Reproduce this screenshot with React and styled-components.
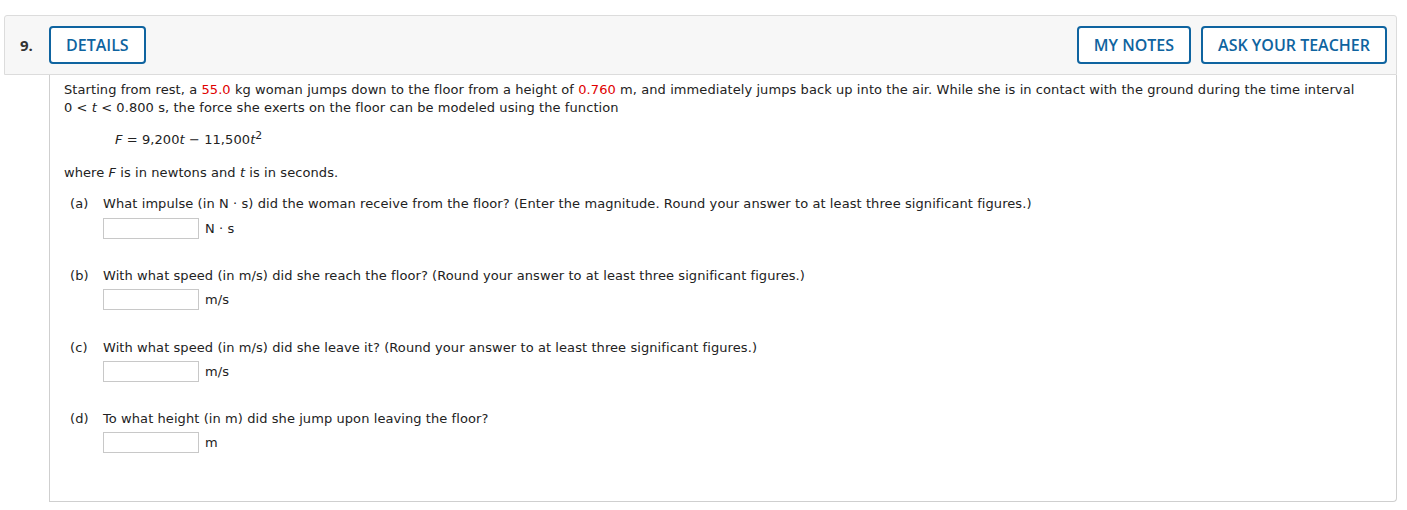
import React from 'react';
import styled, { createGlobalStyle } from 'styled-components';

const Global = createGlobalStyle`
  body {
    margin: 0;
    background: #fff;
    font-family: Verdana, "DejaVu Sans", sans-serif;
    color: #222;
  }
`;

const Page = styled.div`
  padding: 15px 10px 0 4px;
  width: 1393px;
`;

const Header = styled.div`
  display: flex;
  align-items: center;
  height: 58px;
  background: #f7f7f7;
  border: 1px solid #dcdcdc;
  border-radius: 3px 3px 0 0;
  padding: 0 9px 0 0;
`;

const Number = styled.div`
  width: 44px;
  padding-left: 15px;
  box-sizing: border-box;
  font-family: "Open Sans", "Liberation Sans", sans-serif;
  font-weight: 700;
  font-size: 15px;
  color: #333;
`;

const Button = styled.button`
  height: 38px;
  padding: 0 15px;
  background: #fff;
  border: 2px solid #0f64a0;
  border-radius: 4px;
  color: #0f64a0;
  font-family: "Open Sans", "Liberation Sans", sans-serif;
  font-weight: 600;
  font-size: 16px;
  text-transform: uppercase;
  margin-left: ${p => (p.$gap ? '10px' : '0')};
  cursor: pointer;
`;

const Spacer = styled.div`
  flex: 1;
`;

const Body = styled.div`
  margin-left: 45px;
  border: 1px solid #cfcfcf;
  border-top: none;
  border-radius: 0 0 4px 0;
  padding: 6px 14px 48px 14px;
  font-size: 13px;
  line-height: 18px;
  letter-spacing: 0.08px;
`;

const Para = styled.p`
  margin: 0;
`;

const Red = styled.span`
  color: #e00000;
`;

const Formula = styled.div`
  margin: 14px 0 0 51px;
  height: 18px;
`;

const Where = styled.p`
  margin: 15px 0 0 0;
`;

const Part = styled.div`
  margin-top: ${p => p.$top}px;
`;

const Question = styled.div`
  display: flex;
`;

const Letter = styled.span`
  width: 39px;
  padding-left: 6px;
  box-sizing: border-box;
`;

const AnswerRow = styled.div`
  display: flex;
  align-items: center;
  margin: ${p => p.$gap}px 0 0 39px;
`;

const Input = styled.input`
  width: 96px;
  height: 21px;
  box-sizing: border-box;
  border: 1px solid #c8c8c8;
  border-radius: 0;
  padding: 0 4px;
  margin: 0 6px 0 0;
  font: inherit;
`;

const parts = [
  {
    letter: '(a)',
    text: 'What impulse (in N · s) did the woman receive from the floor? (Enter the magnitude. Round your answer to at least three significant figures.)',
    unit: 'N · s',
    top: 13,
    gap: 5,
  },
  {
    letter: '(b)',
    text: 'With what speed (in m/s) did she reach the floor? (Round your answer to at least three significant figures.)',
    unit: 'm/s',
    top: 28,
    gap: 4,
  },
  {
    letter: '(c)',
    text: 'With what speed (in m/s) did she leave it? (Round your answer to at least three significant figures.)',
    unit: 'm/s',
    top: 29,
    gap: 4,
  },
  {
    letter: '(d)',
    text: 'To what height (in m) did she jump upon leaving the floor?',
    unit: 'm',
    top: 28,
    gap: 4,
  },
];

export default function App() {
  return (
    <Page>
      <Global />
      <Header>
        <Number>9.</Number>
        <Button>Details</Button>
        <Spacer />
        <Button>My Notes</Button>
        <Button $gap>Ask Your Teacher</Button>
      </Header>
      <Body>
        <Para>
          Starting from rest, a <Red>55.0</Red> kg woman jumps down to the floor from a height of{' '}
          <Red>0.760</Red> m, and immediately jumps back up into the air. While she is in contact
          with the ground during the time interval <br />0 &lt; <i>t</i> &lt; 0.800 s, the force she
          exerts on the floor can be modeled using the function
        </Para>
        <Formula>
          <i>F</i> = 9,200<i>t</i> − 11,500<i>t</i>
          <sup style={{ lineHeight: 0 }}>2</sup>
        </Formula>
        <Where>
          where <i>F</i> is in newtons and <i>t</i> is in seconds.
        </Where>
        {parts.map(p => (
          <Part key={p.letter} $top={p.top}>
            <Question>
              <Letter>{p.letter}</Letter>
              <span>{p.text}</span>
            </Question>
            <AnswerRow $gap={p.gap}>
              <Input type="text" />
              <span>{p.unit}</span>
            </AnswerRow>
          </Part>
        ))}
      </Body>
    </Page>
  );
}
